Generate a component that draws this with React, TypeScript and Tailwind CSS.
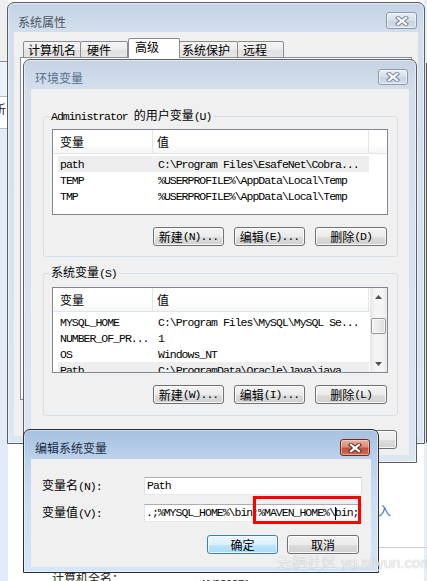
import React from "react";

const CJK = "font-['Noto_Sans_CJK_SC','Noto_Sans_CJK_JP',sans-serif]";
const MONO = "font-['Liberation_Mono','DejaVu_Sans_Mono',monospace]";

function M({ children }: { children: React.ReactNode }) {
  return <span className={`${MONO} text-[11.5px] tracking-[-1px]`}>{children}</span>;
}

function XGlyph({ outline }: { outline: string }) {
  const d = "M3 1.8L11 8.2M11 1.8L3 8.2";
  return (
    <svg width="14" height="10" viewBox="0 0 14 10">
      <path d={d} stroke={outline} strokeWidth="4.2" strokeLinecap="square" fill="none" />
      <path d={d} stroke="#ffffff" strokeWidth="2.2" strokeLinecap="square" fill="none" />
    </svg>
  );
}

function CloseGray({ w, h }: { w: string; h: string }) {
  return (
    <div
      className={`${w} ${h} rounded-[3px] border border-[#8a99ad] bg-[linear-gradient(180deg,#e6edf4_0%,#d6e0eb_50%,#c8d4e2_52%,#d3dee9_100%)] shadow-[inset_0_0_0_1px_rgba(255,255,255,0.55)] flex items-center justify-center`}
    >
      <XGlyph outline="#76839a" />
    </div>
  );
}

function CloseRed() {
  return (
    <div className="w-[30px] h-[17px] rounded-[3px] border border-[#6e2b21] bg-[linear-gradient(180deg,#ebb0a2_0%,#dc8c78_45%,#c5503a_55%,#d06b52_100%)] shadow-[inset_0_0_0_1px_rgba(255,230,220,0.5)] flex items-center justify-center">
      <XGlyph outline="#5a2a22" />
    </div>
  );
}

function Btn({ children, w, primary }: { children: React.ReactNode; w: string; primary?: boolean }) {
  return (
    <div
      className={`${w} h-[19px] shrink-0 rounded-[3px] border flex items-center justify-center text-[12px] leading-none text-black ${
        primary
          ? "border-[#3c7fb1] bg-[linear-gradient(180deg,#ebf6fd_0%,#daf0fc_50%,#bfe6fd_51%,#a9daf5_100%)] shadow-[inset_0_0_0_1px_rgba(255,255,255,0.7)]"
          : "border-[#707070] bg-[linear-gradient(180deg,#f3f3f3_0%,#ebebeb_50%,#dddddd_51%,#d0d0d0_100%)] shadow-[inset_0_0_0_1px_rgba(255,255,255,0.8)]"
      }`}
    >
      {children}
    </div>
  );
}

type Row = { k: string; v: string; sel?: boolean };

function ListView({ rows, scroll }: { rows: Row[]; scroll?: boolean }) {
  return (
    <div className="w-[336px] h-[86px] shrink-0 border border-[#828790] bg-white overflow-hidden flex">
      <div className="flex-1 flex flex-col min-w-0">
        <div className="h-[24px] shrink-0 flex border-b border-[#e3e4e6] bg-[linear-gradient(180deg,#ffffff_0%,#ffffff_60%,#f5f6f7_100%)] text-[12px] text-black">
          <div className="w-[100px] shrink-0 pl-[7px] flex items-center border-r border-[#e5e5e5]">变量</div>
          <div className="w-[216px] shrink-0 pl-[4px] flex items-center border-r border-[#e5e5e5]">值</div>
          <div className="flex-1" />
        </div>
        <div className="pt-[2px] pl-[5px] flex flex-col">
          {rows.map((r) => (
            <div
              key={r.k}
              className={`h-[16px] w-[311px] shrink-0 flex items-center whitespace-nowrap text-black ${r.sel ? "bg-[#eeeeee]" : ""}`}
            >
              <div className="w-[100px] shrink-0 pl-[2px] overflow-hidden">
                <M>{r.k}</M>
              </div>
              <div className="flex-1 overflow-hidden">
                <M>{r.v}</M>
              </div>
            </div>
          ))}
        </div>
      </div>
      {scroll && (
        <div className="w-[17px] shrink-0 flex flex-col bg-[linear-gradient(90deg,#e6e6e6_0%,#f4f4f4_30%,#f4f4f4_70%,#e9e9e9_100%)]">
          <div className="h-[17px] shrink-0 flex items-center justify-center">
            <svg width="7" height="4" viewBox="0 0 7 4">
              <path d="M0 4L3.5 0L7 4Z" fill="#505050" />
            </svg>
          </div>
          <div className="mt-[13px] ml-[1px] w-[15px] h-[16px] rounded-[2px] border border-[#979797] bg-[linear-gradient(90deg,#f4f4f4_0%,#eaeaea_50%,#dcdcdc_100%)] shadow-[inset_0_0_0_1px_rgba(255,255,255,0.7)]" />
          <div className="mt-auto h-[17px] shrink-0 flex items-center justify-center">
            <svg width="7" height="4" viewBox="0 0 7 4">
              <path d="M0 0L3.5 4L7 0Z" fill="#505050" />
            </svg>
          </div>
        </div>
      )}
    </div>
  );
}

function Tab({ label, w, pl, sel }: { label: string; w: string; pl: string; sel?: boolean }) {
  return (
    <div
      className={`${w} ${pl} shrink-0 flex items-center border border-[#898c95] rounded-t-[2px] text-[12px] leading-none text-black ${
        sel
          ? "h-[20px] relative z-10 bg-white border-b-0 pb-[4px]"
          : "h-[17px] bg-[linear-gradient(180deg,#f5f5f5_0%,#ececec_50%,#e0e0e0_51%,#e6e6e6_100%)] -ml-px first:ml-0"
      }`}
    >
      {label}
    </div>
  );
}

export default function App() {
  const userRows: Row[] = [
    { k: "path", v: "C:\\Program Files\\EsafeNet\\Cobra...", sel: true },
    { k: "TEMP", v: "%USERPROFILE%\\AppData\\Local\\Temp" },
    { k: "TMP", v: "%USERPROFILE%\\AppData\\Local\\Temp" },
  ];
  const sysRows: Row[] = [
    { k: "MYSQL_HOME", v: "C:\\Program Files\\MySQL\\MySQL Se..." },
    { k: "NUMBER_OF_PR...", v: "1" },
    { k: "OS", v: "Windows_NT" },
    { k: "Path", v: "C:\\ProgramData\\Oracle\\Java\\java...", sel: true },
  ];

  return (
    <div className={`relative w-[427px] h-[581px] overflow-hidden bg-white ${CJK}`}>
      {/* background: window behind on the left */}
      <div className="absolute left-0 top-0 w-[8px] h-[581px] bg-[#e2ebf7] flex flex-col">
        <div className="h-[62px] shrink-0 bg-[#efefef] border-b border-[#8c8c8c]" />
        <div className="h-[34px] shrink-0 bg-[#eef3f9]" />
        <div className="h-[33px] shrink-0 bg-white border-y border-[#a9bdd6] overflow-hidden relative">
          <span className="absolute left-[-6px] top-[6px] text-[12px] leading-none text-[#1b1b1b]">析</span>
        </div>
      </div>
      {/* right strip behind */}
      <div className="absolute left-[424px] top-0 w-[3px] h-[581px] bg-[#e6edf5]">
        <div className="absolute left-[2px] top-[63px] w-px h-[380px] bg-[#555]" />
      </div>
      {/* background texts below */}
      <span className="absolute left-[365px] top-[503px] text-[13px] leading-none text-[#3a6fb5]">输入</span>
      <div className="absolute left-[379px] top-[547px] w-[48px] h-px bg-[#cfcfcf]" />
      <span className="absolute left-[52px] top-[572px] text-[12px] leading-none text-[#222]">计算机全名：</span>
      <span className="absolute left-[202px] top-[572px] leading-none text-[#222]">
        <M>NV089871</M>
      </span>

      {/* 系统属性 window */}
      <div className="absolute left-[7px] top-[2px] w-[418px] h-[442px] rounded-t-[7px] border border-[#5e5e5e] bg-[linear-gradient(180deg,#c4d3e5_0px,#d3dfec_30px,#dbe6f2_100%)] shadow-[inset_0_0_0_1px_rgba(255,255,255,0.5)] flex flex-col">
        <div className="h-[29px] shrink-0 flex justify-between">
          <span className="ml-[10px] mt-[12px] text-[12px] leading-[14px] text-[#4a5566]">系统属性</span>
          <div className="mt-[9px] mr-[7px]">
            <CloseGray w="w-[31px]" h="h-[17px]" />
          </div>
        </div>
        <div className="mx-[6px] h-[404px] shrink-0 bg-[#f0f0f0] pt-[6px] pl-[6px] flex flex-col">
          <div className="h-[20px] shrink-0 flex items-end pl-[3px]">
            <Tab label="计算机名" w="w-[58px]" pl="pl-[4px]" />
            <Tab label="硬件" w="w-[48px]" pl="pl-[6px]" />
            <Tab label="高级" w="w-[52px]" pl="pl-[6px]" sel />
            <Tab label="系统保护" w="w-[59px]" pl="pl-[2px]" />
            <Tab label="远程" w="w-[47px]" pl="pl-[5px]" />
          </div>
          <div className="-mt-px h-[343px] w-[392px] shrink-0 border border-[#898c95] bg-white" />
        </div>
      </div>

      {/* 环境变量 window */}
      <div className="absolute left-[23px] top-[59px] w-[394px] h-[404px] rounded-t-[7px] border border-[#5e5e5e] bg-[linear-gradient(180deg,#c4d3e5_0px,#d3dfec_30px,#dbe6f2_100%)] shadow-[inset_0_0_0_1px_rgba(255,255,255,0.5)] flex flex-col">
        <div className="h-[29px] shrink-0 flex justify-between">
          <span className="ml-[11px] mt-[11px] text-[12px] leading-[14px] text-[#56708c]">环境变量</span>
          <div className="mt-[9px] mr-[8px]">
            <CloseGray w="w-[30px]" h="h-[16px]" />
          </div>
        </div>
        <div className="mx-[7px] h-[366px] shrink-0 bg-[#f0f0f0] pt-[19px] pl-[12px] flex flex-col text-[12px] text-black">
          <fieldset className="w-[355px] border border-[#d5dfe5] rounded-[3px] pl-[8px] pb-[10px]">
            <legend className="ml-[-2px] pl-[1px] pr-[2px] leading-[14px] text-[12px]">
              <M>Administrator </M>的用户变量<M>(U)</M>
            </legend>
            <div className="mt-[5px]">
              <ListView rows={userRows} />
            </div>
            <div className="mt-[12px] ml-[101px] flex gap-[10px]">
              <Btn w="w-[71px]">新建<M>(N)...</M></Btn>
              <Btn w="w-[71px]">编辑<M>(E)...</M></Btn>
              <Btn w="w-[72px]">删除<M>(D)</M></Btn>
            </div>
          </fieldset>
          <fieldset className="mt-[8px] w-[355px] border border-[#d5dfe5] rounded-[3px] pl-[8px] pb-[11px]">
            <legend className="ml-[-2px] pl-[1px] pr-[2px] leading-[14px] text-[12px]">
              系统变量<M>(S)</M>
            </legend>
            <div className="mt-[6px]">
              <ListView rows={sysRows} scroll />
            </div>
            <div className="mt-[12px] ml-[101px] flex gap-[10px]">
              <Btn w="w-[71px]">新建<M>(W)...</M></Btn>
              <Btn w="w-[71px]">编辑<M>(I)...</M></Btn>
              <Btn w="w-[72px]">删除<M>(L)</M></Btn>
            </div>
          </fieldset>
          <div className="mt-[14px] pr-[12px] flex justify-end gap-[5px]">
            <Btn w="w-[75px]">确定</Btn>
            <Btn w="w-[72px]">取消</Btn>
          </div>
        </div>
      </div>

      {/* 编辑系统变量 dialog */}
      <div className="absolute left-[23px] top-[429px] w-[356px] h-[144px] rounded-t-[7px] border border-[#2e2e2e] bg-[linear-gradient(180deg,#a6c1e0_0px,#bad1eb_28px,#c9dcf1_60px,#d4e6f8_100%)] shadow-[inset_0_0_0_1px_rgba(255,255,255,0.45)] flex flex-col">
        <div className="h-[29px] shrink-0 flex justify-between">
          <span className="ml-[11px] mt-[11px] text-[12px] leading-[14px] text-[#1c2c42]">编辑系统变量</span>
          <div className="mt-[9px] mr-[8px]">
            <CloseRed />
          </div>
        </div>
        <div className="relative mx-[7px] h-[108px] shrink-0 bg-[#f0f0f0] pt-[18px] flex flex-col text-[12px] text-black">
          <div className="h-[18px] flex items-center">
            <div className="w-[113px] shrink-0 pl-[11px] leading-none">
              变量名<M>(N):</M>
            </div>
            <div className="w-[218px] h-[18px] shrink-0 border border-[#abadb3] border-l-[#e2e3ea] border-r-[#dbdfe6] border-b-[#e3e9ef] bg-white pl-[2px] flex items-center overflow-hidden whitespace-nowrap leading-none">
              <M>Path</M>
            </div>
          </div>
          <div className="mt-[9px] h-[18px] flex items-center">
            <div className="w-[113px] shrink-0 pl-[11px] leading-none">
              变量值<M>(V):</M>
            </div>
            <div className="w-[218px] h-[18px] shrink-0 border border-[#abadb3] border-l-[#e2e3ea] border-r-[#dbdfe6] border-b-[#e3e9ef] bg-white pl-[1px] flex items-center overflow-hidden whitespace-nowrap leading-none">
              <M>.;%MYSQL_HOME%\bin;%MAVEN_HOME%\</M>
              <span className="inline-block w-px h-[13px] bg-black -mr-px" />
              <M>bin;</M>
            </div>
          </div>
          <div className="mt-[13px] pr-[12px] flex justify-end gap-[9px]">
            <Btn w="w-[71px]" primary>确定</Btn>
            <Btn w="w-[72px]">取消</Btn>
          </div>
          {/* red annotation box */}
          <div className="absolute left-[222px] top-[37px] w-[108px] h-[28px] border-[3px] border-[#ff0000]" />
        </div>
      </div>

      {/* watermark */}
      <span className="absolute left-[277px] top-[555px] text-[15px] leading-none whitespace-nowrap font-['Liberation_Sans','Noto_Sans_CJK_SC',sans-serif] text-white/80 [text-shadow:0_0_1px_rgba(0,0,0,0.35)]">
        云栖社区 yq.aliyun.com
      </span>
    </div>
  );
}
